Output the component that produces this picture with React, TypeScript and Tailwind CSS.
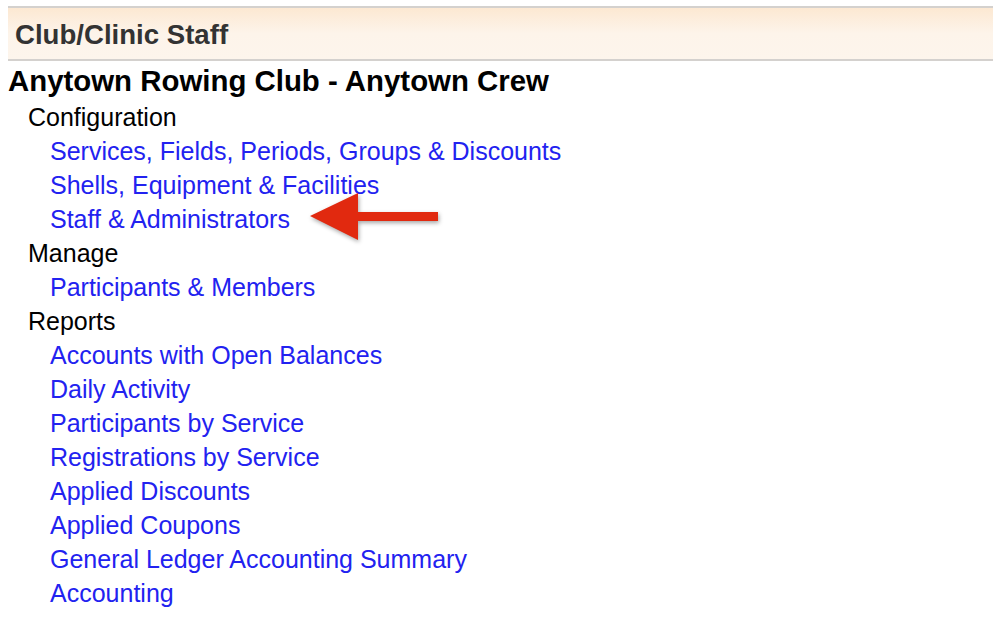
import type { ReactNode } from "react";

interface Section {
  title: string;
  links: string[];
}

const sections: Section[] = [
  {
    title: "Configuration",
    links: [
      "Services, Fields, Periods, Groups & Discounts",
      "Shells, Equipment & Facilities",
      "Staff & Administrators",
    ],
  },
  {
    title: "Manage",
    links: ["Participants & Members"],
  },
  {
    title: "Reports",
    links: [
      "Accounts with Open Balances",
      "Daily Activity",
      "Participants by Service",
      "Registrations by Service",
      "Applied Discounts",
      "Applied Coupons",
      "General Ledger Accounting Summary",
      "Accounting",
    ],
  },
];

function Row({ indent, children }: { indent: string; children: ReactNode }) {
  return <div className={`${indent} h-[34px] leading-[34px] whitespace-nowrap`}>{children}</div>;
}

// red callout pointing at a menu entry
function Arrow() {
  return (
    <svg
      width="140"
      height="60"
      viewBox="0 0 140 60"
      className="absolute left-[306px] top-[188px] drop-shadow-[1px_2px_2px_rgba(0,0,0,0.35)]"
    >
      <path d="M4 28 L52 5 L52 24 L132 24 L132 33 L52 33 L52 52 Z" fill="#e1290f" />
    </svg>
  );
}

export default function App() {
  return (
    <div className="relative w-[993px] h-[617px] bg-white overflow-hidden font-['Liberation_Sans',Arial,sans-serif]">
      <div className="mt-[6px] ml-[8px] border-y-2 border-[#d4d1ce] bg-gradient-to-b from-[#fce8d2] via-[#fdf4ea] to-[#fdf5ec] h-[55px] flex items-center pl-[7px] pt-[2px]">
        <h1 className="text-[27.6px] font-bold text-[#333333]">Club/Clinic Staff</h1>
      </div>

      <div className="pl-[8px] mt-[2px] h-[36px] leading-[36px] text-[29.4px] font-bold text-black whitespace-nowrap">
        Anytown Rowing Club - Anytown Crew
      </div>

      <div className="text-[25px] pt-[1px]">
        {sections.map((s) => (
          <div key={s.title}>
            <Row indent="pl-[28px] text-black">{s.title}</Row>
            {s.links.map((l) => (
              <Row key={l} indent="pl-[50px]">
                <a href="#" className="text-[#2222f0]">
                  {l}
                </a>
              </Row>
            ))}
          </div>
        ))}
      </div>

      <Arrow />
    </div>
  );
}
